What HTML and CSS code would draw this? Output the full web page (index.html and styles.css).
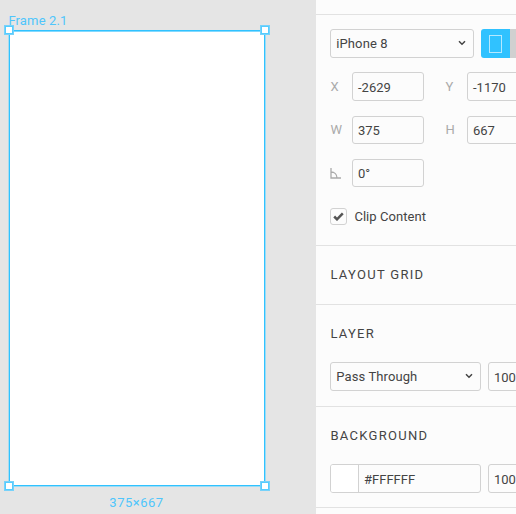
FILE: index.html
```
<!DOCTYPE html>
<html lang="en">
<head>
<meta charset="utf-8">
<title>Frame properties</title>
<link rel="stylesheet" href="styles.css">
</head>
<body>
<div class="app">
  <main class="canvas">
    <div class="frame-title">Frame 2.1</div>
    <div class="frame">
      <span class="handle top left"></span>
      <span class="handle top right"></span>
      <span class="handle bottom left"></span>
      <span class="handle bottom right"></span>
    </div>
    <div class="frame-size">375×667</div>
  </main>
  <aside class="panel">
    <section class="section properties">
      <div class="row">
        <div class="box select preset"><span>iPhone 8</span>
          <svg class="chevron" width="8" height="6" viewBox="0 0 8 6"><path d="M1 1.2l3 3 3-3"/></svg>
        </div>
        <div class="orientation">
          <div class="portrait"><svg width="13" height="18" viewBox="0 0 13 18"><rect x=".5" y=".5" width="12" height="17"/></svg></div>
          <div class="landscape"></div>
        </div>
      </div>
      <div class="row fields"><label>X</label><div class="box field">-2629</div><label>Y</label><div class="box field">-1170</div></div>
      <div class="row fields size"><label>W</label><div class="box field">375</div><label>H</label><div class="box field">667</div></div>
      <div class="row fields rotation"><label><svg class="angle" width="11" height="11" viewBox="0 0 11 11"><path d="M1 0v10H11M1 4C4.500 4 7 6.500 7 10"/></svg></label><div class="box field">0°</div></div>
      <div class="row clip">
        <span class="checkbox"><svg width="11" height="9" viewBox="0 0 11 9"><path d="M1.200 4.500l2.800 2.800 5.800-6"/></svg></span>
        <span>Clip Content</span>
      </div>
    </section>
    <section class="section grid"><h2>LAYOUT GRID</h2></section>
    <section class="section layer">
      <h2>LAYER</h2>
      <div class="row">
        <div class="box select blend"><span>Pass Through</span>
          <svg class="chevron" width="8" height="6" viewBox="0 0 8 6"><path d="M1 1.200l3 3 3-3"/></svg>
        </div>
        <div class="box field opacity">100</div>
      </div>
    </section>
    <section class="section background">
      <h2>BACKGROUND</h2>
      <div class="row">
        <div class="box color"><span class="swatch"></span><span>#FFFFFF</span></div>
        <div class="box field opacity">100</div>
      </div>
    </section>
  </aside>
</div>
</body>
</html>
```
FILE: styles.css
```
* { box-sizing: border-box; }
body {
  margin: 0;
  overflow: hidden;
  font: 13px/15px Roboto, sans-serif;
  color: #444;
}
.app { display: flex; width: 516px; height: 514px; overflow: hidden; }

.canvas {
  position: relative;
  flex: 0 0 316px;
  background: #e5e5e5;
  color: #4fc5fc;
}
.frame-title { position: absolute; left: 8.400px; top: 13px; letter-spacing: .15px; }
.frame {
  position: absolute;
  left: 9px;
  top: 30px;
  width: 256px;
  height: 456px;
  background: #fff;
  border: 1px solid #30c2ff;
  box-shadow: 1px 1px 0 #9bdcf6, -1px 0 0 #a8dcf0, inset 0 1px 0 #83d9ff;
}
.frame-size { position: absolute; left: 8px; width: 257px; top: 495px; text-align: center; letter-spacing: .5px; }
.handle {
  position: absolute;
  width: 10px;
  height: 10px;
  background: #fff;
  border: 1px solid #77d2fa;
  box-shadow: inset 0 0 0 1px #55ccff;
}
.top { top: -6px; }
.bottom { bottom: -6px; }
.left { left: -6px; }
.right { right: -6px; }

.panel { flex: 0 0 200px; overflow: hidden; background: #fcfcfc; padding-top: 14px; }
.section { border-top: 1px solid #e2e2e2; padding-left: 14px; }
.row { display: flex; width: 260px; }
.properties { height: 231px; padding-top: 14px; }
.grid { height: 59px; padding-top: 21px; }
.layer { height: 102px; padding-top: 21px; }
.background { height: 101px; padding-top: 21px; }
.panel::after { content: ""; display: block; border-top: 1px solid #e2e2e2; }

h2 { margin: 0 0 21px; padding-left: .4px; font-size: 13px; line-height: 15px; font-weight: 400; letter-spacing: 1.300px; }

.box {
  display: flex;
  align-items: center;
  height: 29px;
  border: 1px solid #d2d2d2;
  border-radius: 3px;
}
.select { justify-content: space-between; padding: 0 7px 1px 5.300px; letter-spacing: .1px; }
.preset { width: 144px; margin-right: 7px; }
.chevron { fill: none; stroke: #444; stroke-width: 1.500; }
.blend, .color { width: 151px; margin-right: 7px; }

.orientation { display: flex; width: 58px; height: 29px; border-radius: 3px; overflow: hidden; }
.portrait, .landscape { flex: 1; display: flex; align-items: center; justify-content: center; }
.portrait { background: #30c2ff; }
.portrait svg { fill: none; stroke: #b5e8ff; }
.landscape { background: #d0d0d0; }

.fields { display: grid; grid-template-columns: 22px 72px 21px 22px 72px; margin-top: 14px; }
.fields label { grid-column: 1; padding-left: .4px; line-height: 29px; color: #aaa; }
.fields label ~ label { grid-column: 4; }
.field { padding: 2px 5px 0; }
.size, .rotation { margin-top: 15px; }
.size .box, .rotation .box { height: 28px; padding-top: 0; }
.size label { line-height: 27px; }
.opacity { width: 72px; }
.angle { display: block; margin-top: 9px; fill: none; stroke: #aaa; stroke-width: 1.300; }

.clip { align-items: center; gap: 7.400px; margin-top: 21px; letter-spacing: .05px; }
.checkbox {
  display: flex;
  align-items: center;
  justify-content: center;
  width: 17px;
  height: 17px;
  border: 1px solid #d2d2d2;
  border-radius: 3px;
}
.checkbox svg { fill: none; stroke: #555; stroke-width: 2.500; }
.swatch { width: 28px; height: 27px; margin-right: 5px; background: #fff; border-right: 1px solid #d2d2d2; border-radius: 2px 0 0 2px; }
.color span:last-child { padding-top: 2px; }
```
